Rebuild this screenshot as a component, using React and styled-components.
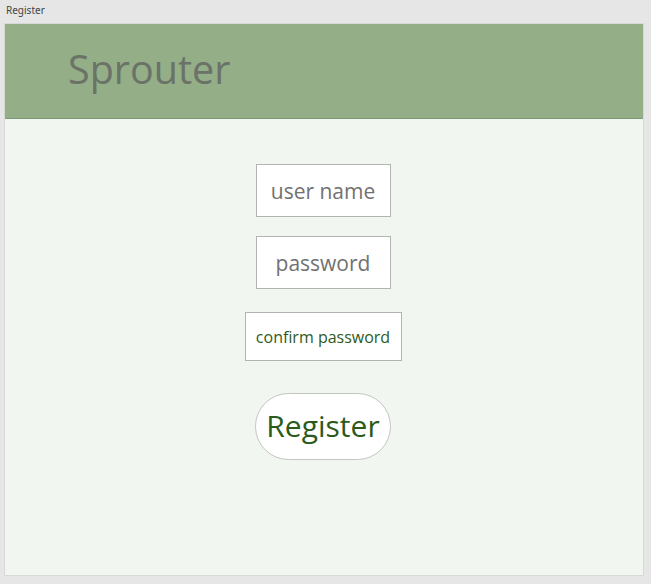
import React from "react";
import styled, { createGlobalStyle } from "styled-components";

const GlobalStyle = createGlobalStyle`
  html, body {
    margin: 0;
    padding: 0;
    background: #e6e6e6;
    font-family: "Open Sans", "Noto Sans", sans-serif;
  }
`;

const Window = styled.div`
  width: 651px;
  height: 584px;
  display: flex;
  flex-direction: column;
  background: #e6e6e6;
  box-sizing: border-box;
  padding: 0 7px 8px 4px;
`;

const TitleBar = styled.div`
  height: 23px;
  display: flex;
  align-items: center;
  padding-left: 2px;
  font-size: 10px;
  color: #444;
  font-family: "Noto Sans", sans-serif;
  padding-bottom: 4px;
  box-sizing: border-box;
`;

const Panel = styled.div`
  flex: 1;
  display: flex;
  flex-direction: column;
  border: 1px solid #d6d9d5;
  background: #f2f6f1;
`;

const Header = styled.div`
  height: 95px;
  background: #94ae87;
  border-bottom: 1px solid #7f9874;
  display: flex;
  align-items: center;
  padding-left: 63px;
  padding-bottom: 4px;
  box-sizing: border-box;
`;

const Brand = styled.h1`
  margin: 0;
  font-weight: 400;
  font-size: 39.5px;
  color: #6b7268;
`;

const Form = styled.div`
  display: flex;
  flex-direction: column;
  align-items: center;
  padding: 45px 2px 0 0;
`;

const Field = styled.div`
  width: ${(p) => p.$w}px;
  height: ${(p) => p.$h}px;
  box-sizing: border-box;
  border: 1px solid #b3b3b3;
  background: #fff;
  display: flex;
  align-items: center;
  justify-content: center;
  font-size: ${(p) => p.$size}px;
  color: ${(p) => p.$color};
  margin-bottom: ${(p) => p.$mb}px;
`;

const Button = styled.button`
  width: 136px;
  height: 67px;
  border-radius: 34px;
  border: 1px solid #c2c6c1;
  background: #fff;
  color: #2b5a1b;
  font-family: "Open Sans", "Noto Sans", sans-serif;
  font-size: 30px;
  display: flex;
  align-items: center;
  justify-content: center;
  padding: 0 0 2px;
`;

export default function App() {
  return (
    <>
      <GlobalStyle />
      <Window>
        <TitleBar>Register</TitleBar>
        <Panel>
          <Header>
            <Brand>Sprouter</Brand>
          </Header>
          <Form>
            <Field $w={135} $h={53} $size={21} $color="#717171" $mb={19}>
              user name
            </Field>
            <Field $w={135} $h={53} $size={21} $color="#717171" $mb={23}>
              password
            </Field>
            <Field $w={157} $h={49} $size={16} $color="#2f5a20" $mb={32}>
              confirm password
            </Field>
            <Button>Register</Button>
          </Form>
        </Panel>
      </Window>
    </>
  );
}
